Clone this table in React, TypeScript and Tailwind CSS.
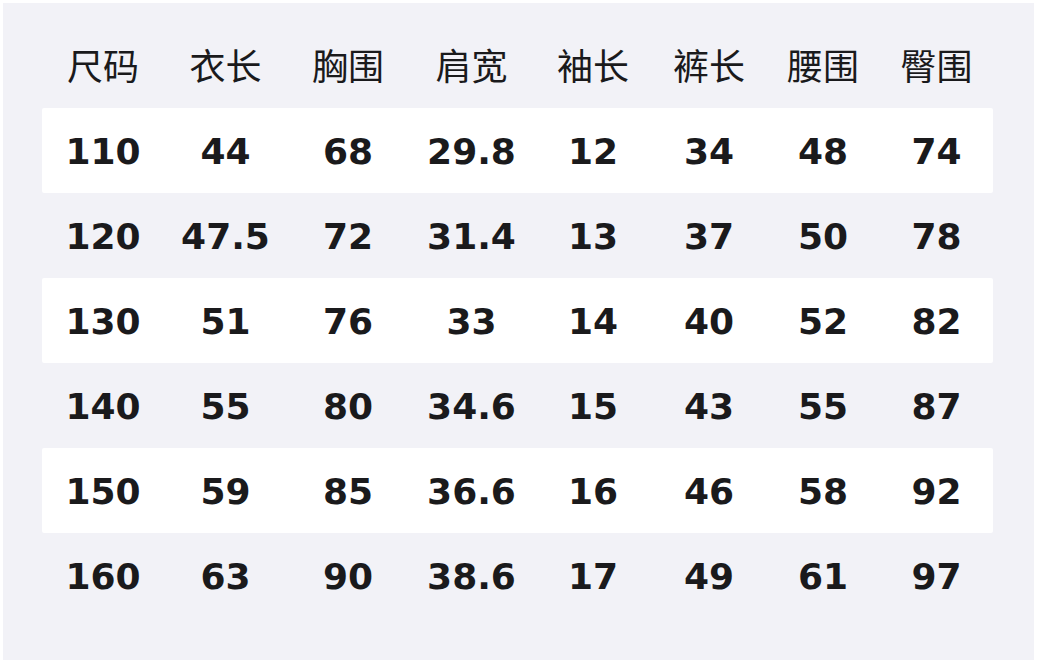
const headers = ["尺码", "衣长", "胸围", "肩宽", "袖长", "裤长", "腰围", "臀围"];

const rows = [
  ["110", "44", "68", "29.8", "12", "34", "48", "74"],
  ["120", "47.5", "72", "31.4", "13", "37", "50", "78"],
  ["130", "51", "76", "33", "14", "40", "52", "82"],
  ["140", "55", "80", "34.6", "15", "43", "55", "87"],
  ["150", "59", "85", "36.6", "16", "46", "58", "92"],
  ["160", "63", "90", "38.6", "17", "49", "61", "97"],
];

const cols = "grid w-[951px] grid-cols-[122px_123px_122px_125px_118px_114px_114px_113px]";

export default function App() {
  return (
    <div className="w-[1037px] h-[663px] bg-white p-[3px]">
      <div
        className="h-[657px] w-[1031px] bg-[#f2f2f7] pt-[21px] pl-[39px] text-[#1a1a1c]"
        style={{ fontFamily: '"DejaVu Sans", "Noto Sans CJK SC", sans-serif' }}
      >
        {/* header */}
        <div className={`${cols} h-[84px] items-center text-[36px]`}>
          {headers.map((h) => (
            <div key={h} className="pt-[4px] text-center leading-none">
              {h}
            </div>
          ))}
        </div>

        {/* rows */}
        {rows.map((r, i) => (
          <div
            key={i}
            className={`${cols} h-[85px] items-center rounded-[2px] ${
              i % 2 === 0 ? "bg-white" : ""
            }`}
          >
            {r.map((v, j) => (
              <div key={j} className="pt-[2px] text-center text-[36px] font-bold leading-none">
                {v}
              </div>
            ))}
          </div>
        ))}
      </div>
    </div>
  );
}
